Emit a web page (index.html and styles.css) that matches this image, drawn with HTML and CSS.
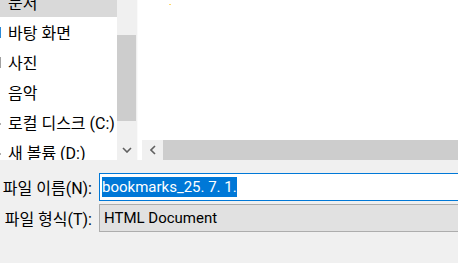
FILE: index.html
```html
<!DOCTYPE html>
<html lang="ko">
<head>
    <meta charset="UTF-8">
    <meta name="viewport" content="width=device-width, initial-scale=1.0">
    <title>다른 이름으로 저장</title>
    <link rel="stylesheet" href="styles.css">
</head>
<body>
    <!-- Browser: navigation pane + file list -->
    <div class="browser">
        <div class="nav-pane">
            <ul class="nav-list">
                <li class="nav-item selected"><span class="nav-icon"></span>문서</li>
                <li class="nav-item"><span class="nav-icon icon-desktop"></span>바탕 화면</li>
                <li class="nav-item"><span class="nav-icon icon-photo"></span>사진</li>
                <li class="nav-item"><span class="nav-icon"></span>음악</li>
                <li class="nav-item"><span class="nav-icon icon-drive"></span>로컬 디스크 (C:)</li>
                <li class="nav-item"><span class="nav-icon icon-drive"></span>새 볼륨 (D:)</li>
            </ul>
            <div class="vscroll">
                <div class="vscroll-track">
                    <div class="vscroll-thumb"></div>
                </div>
                <div class="scroll-btn">
                    <svg width="10" height="6" viewBox="0 0 10 6"><polyline points="1,1 5,5 9,1" fill="none" stroke="#606060" stroke-width="1.6"/></svg>
                </div>
            </div>
        </div>

        <div class="file-pane">
            <div class="file-list">
                <span class="folder-peek"></span>
            </div>
            <div class="hscroll">
                <div class="scroll-btn hbtn">
                    <svg width="6" height="10" viewBox="0 0 6 10"><polyline points="5,1 1,5 5,9" fill="none" stroke="#606060" stroke-width="1.6"/></svg>
                </div>
                <div class="hscroll-thumb"></div>
            </div>
        </div>
    </div>

    <!-- Save form -->
    <div class="save-form">
        <label class="field-label">파일 이름(N):</label>
        <div class="field field-input"><span class="selection">bookmarks_25. 7. 1.</span></div>
        <label class="field-label">파일 형식(T):</label>
        <div class="field field-combo">HTML Document</div>
    </div>
</body>
</html>
```

FILE: styles.css
```css
* {
    margin: 0;
    padding: 0;
    box-sizing: border-box;
}

body {
    font-family: Roboto, "Noto Sans CJK KR", sans-serif;
    font-size: 16px;
    background: #f0f0f0;
    color: #000000;
    width: 458px;
    height: 263px;
    overflow: hidden;
}

/* Browser area */
.browser {
    display: flex;
    height: 160px;
}

.nav-pane {
    display: flex;
    width: 137px;
    background: #ffffff;
}

.nav-list {
    list-style: none;
    width: 117px;
    overflow: hidden;
    margin-top: -13px;
}

.nav-item {
    display: flex;
    align-items: center;
    height: 30px;
    white-space: nowrap;
}

.nav-item.selected {
    background: #d9d9d9;
}

.nav-icon {
    width: 1px;
    height: 11px;
    margin-right: 7px;
    flex-shrink: 0;
}

.icon-desktop {
    background: #2a8ad8;
}

.icon-photo {
    background: #a0a0a0;
}

.icon-drive {
    height: 2px;
    margin-top: 4px;
    background: #b0b0b0;
}

.vscroll {
    width: 20px;
    display: flex;
    flex-direction: column;
    background: #f0f0f0;
}

.vscroll-track {
    flex: 1;
}

.vscroll-thumb {
    margin-top: 35px;
    width: 19px;
    height: 86px;
    background: #cdcdcd;
}

.scroll-btn {
    height: 20px;
    display: flex;
    align-items: center;
    justify-content: center;
    background: #f0f0f0;
}

/* File list */
.file-pane {
    flex: 1;
    display: flex;
    flex-direction: column;
    background: #ffffff;
    border-left: 1px solid #fafafa;
}

.file-list {
    flex: 1;
    padding-left: 31px;
    line-height: 0;
}

.folder-peek {
    display: inline-block;
    width: 2px;
    height: 1px;
    background: #ffd86b;
}

.hscroll {
    display: flex;
    height: 20px;
    margin-left: 4px;
}

.hbtn {
    width: 21px;
}

.hscroll-thumb {
    flex: 1;
    background: #cdcdcd;
}

/* Form */
.save-form {
    display: grid;
    grid-template-columns: 99px 380px;
    row-gap: 3px;
    padding-top: 13px;
}

.field-label {
    display: flex;
    align-items: center;
    justify-content: flex-end;
    padding-right: 7px;
    height: 28px;
    white-space: nowrap;
}

.field {
    height: 28px;
    display: flex;
    align-items: center;
    font-size: 15px;
}

.field-input {
    background: #ffffff;
    border: 1px solid #0078d7;
    padding-left: 2px;
}

.selection {
    background: #0078d7;
    color: #ffffff;
    line-height: 20px;
    height: 20px;
}

.field-combo {
    background: #e1e1e1;
    border: 1px solid #adadad;
    padding-left: 4px;
}
```
